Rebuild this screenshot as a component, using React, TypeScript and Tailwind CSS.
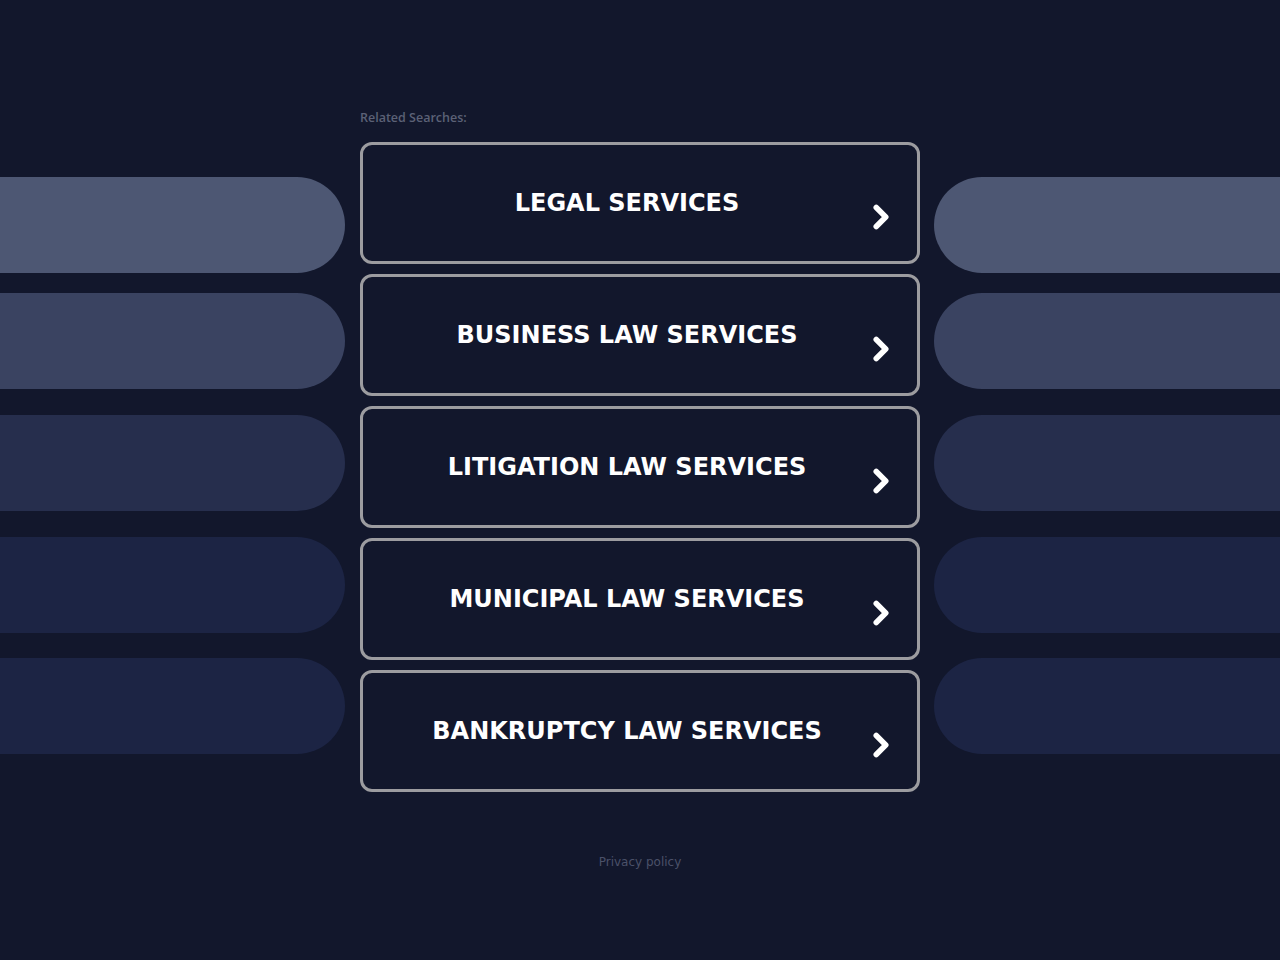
import { ChevronRight } from 'lucide-react';

const links = [
  'LEGAL SERVICES',
  'BUSINESS LAW SERVICES',
  'LITIGATION LAW SERVICES',
  'MUNICIPAL LAW SERVICES',
  'BANKRUPTCY LAW SERVICES',
];

// side decoration pills, top to bottom
const pills = [
  { color: 'bg-[#4d5773]', mt: 'mt-[177px]' },
  { color: 'bg-[#3a4361]', mt: 'mt-[20px]' },
  { color: 'bg-[#262e4d]', mt: 'mt-[26px]' },
  { color: 'bg-[#1c2444]', mt: 'mt-[26px]' },
  { color: 'bg-[#1c2444]', mt: 'mt-[25px]' },
];

function Pills({ side }: { side: 'left' | 'right' }) {
  return (
    <div className={`flex flex-col ${side === 'left' ? 'w-[345px] shrink-0' : 'flex-1'}`}>
      {pills.map((p, i) => (
        <div
          key={i}
          className={`${p.mt} h-[96px] ${p.color} ${side === 'left' ? 'rounded-r-[48px]' : 'rounded-l-[48px]'}`}
        />
      ))}
    </div>
  );
}

export default function App() {
  return (
    <div className="min-h-[960px] w-full bg-[#12172c] flex flex-col">
      <div className="flex">
        <Pills side="left" />
        <main className="w-[560px] shrink-0 ml-[15px] mr-[14px] flex flex-col pt-[109px]">
          <div className="text-[12.5px] leading-[17px] text-[#5b6176] font-['Open_Sans',sans-serif] font-semibold">
            Related Searches:
          </div>
          <div className="flex flex-col gap-[10px] mt-[16px]">
            {links.map((label) => (
              <a
                key={label}
                href="#"
                className="relative h-[122px] rounded-[12px] border-[3px] border-[#9c9ca0] bg-[#12172c] flex items-center justify-center pr-[26px]"
              >
                <span className="text-white font-bold text-[24px] font-['DejaVu_Sans',sans-serif] -mt-[1px]">
                  {label}
                </span>
                <ChevronRight
                  className="absolute right-[17px] top-[53px] text-white"
                  size={38}
                  strokeWidth={3.5}
                />
              </a>
            ))}
          </div>
        </main>
        <Pills side="right" />
      </div>
      <div className="mt-[61px] text-center text-[12px] text-[#4b5169] font-['DejaVu_Sans',sans-serif]">
        Privacy policy
      </div>
    </div>
  );
}
